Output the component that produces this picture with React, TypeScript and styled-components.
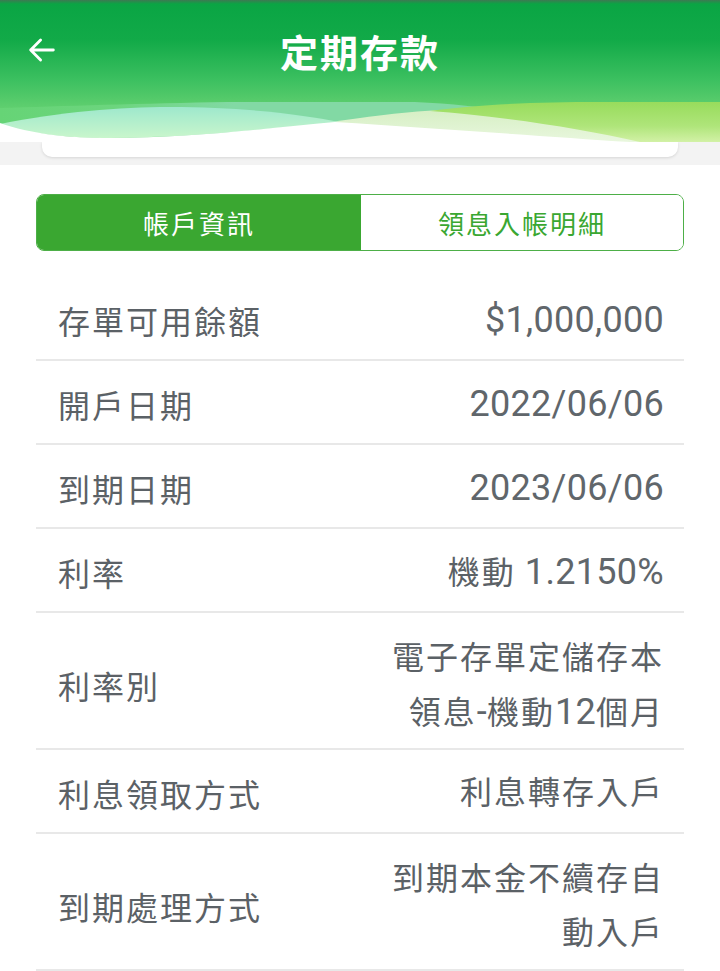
import styled, { createGlobalStyle } from "styled-components";

const GlobalStyle = createGlobalStyle`
  html, body {
    margin: 0;
    padding: 0;
    background: #ffffff;
  }
  body {
    font-family: Roboto, "Noto Sans CJK TC", sans-serif;
  }
`;

const Page = styled.div`
  width: 720px;
  min-height: 971px;
  background: #ffffff;
  overflow: hidden;
`;

const Header = styled.header`
  display: flex;
  flex-direction: column;
  height: 142px;
  background: linear-gradient(
    180deg,
    #3d7a52 0px,
    #0aa544 4px,
    #12aa48 40px,
    #3cc060 80px,
    #62d070 110px
  );
`;

const TopBar = styled.div`
  display: flex;
  align-items: center;
  justify-content: center;
  height: 102px;
  position: relative;
`;

const BackButton = styled.button`
  position: absolute;
  left: 24px;
  top: 32px;
  width: 36px;
  height: 36px;
  border: none;
  background: none;
  padding: 0;
  display: flex;
  align-items: center;
  justify-content: center;
`;

const Title = styled.h1`
  margin: 0;
  margin-top: -2px;
  color: #ffffff;
  font-family: "Noto Sans CJK TC", sans-serif;
  font-size: 38px;
  font-weight: 700;
  letter-spacing: 2px;
`;

const Wave = styled.svg`
  display: block;
  width: 720px;
  height: 40px;
`;

const Strip = styled.div`
  background: #f3f3f3;
  padding: 0 42px 8px;
`;

const Card = styled.div`
  height: 15px;
  background: #ffffff;
  border-radius: 0 0 10px 10px;
  box-shadow: 0 1px 3px rgba(0, 0, 0, 0.12);
`;

const Content = styled.main`
  padding: 29px 36px 0;
`;

const Tabs = styled.div`
  display: grid;
  grid-template-columns: 324px 1fr;
  height: 57px;
  border: 1.5px solid #4daf47;
  border-radius: 8px;
  overflow: hidden;
  box-sizing: border-box;
`;

const Tab = styled.div<{ $active?: boolean }>`
  display: flex;
  align-items: center;
  justify-content: center;
  background: ${(p) => (p.$active ? "#3aa731" : "#ffffff")};
  color: ${(p) => (p.$active ? "#ffffff" : "#3aa731")};
  font-family: "Noto Sans CJK TC", sans-serif;
  font-size: 26px;
  letter-spacing: 2px;
`;

const List = styled.div`
  margin-top: 26px;
  display: flex;
  flex-direction: column;
`;

const Row = styled.div<{ $tall?: boolean }>`
  display: flex;
  align-items: center;
  justify-content: space-between;
  height: ${(p) => (p.$tall ? "137px" : "84px")};
  box-sizing: border-box;
  padding: ${(p) => (p.$tall ? "8px" : "4px")} 20px 0 22px;
  border-bottom: 2px solid #e8e8e8;
  color: #5b6166;
  font-size: 32px;
  letter-spacing: 2px;
`;

const Label = styled.span`
  font-family: "Noto Sans CJK TC", sans-serif;
`;

const Value = styled.span`
  text-align: right;
  line-height: 54px;
  white-space: pre-line;
`;

const Num = styled.span`
  font-family: Roboto, sans-serif;
  font-size: 36px;
  letter-spacing: 0.3px;
  color: #60666b;
`;

const rows = [
  { label: "存單可用餘額", value: "$1,000,000" },
  { label: "開戶日期", value: "2022/06/06" },
  { label: "到期日期", value: "2023/06/06" },
  { label: "利率", value: "機動 1.2150%" },
  { label: "利率別", value: "電子存單定儲存本\n領息-機動12個月", tall: true },
  { label: "利息領取方式", value: "利息轉存入戶" },
  { label: "到期處理方式", value: "到期本金不續存自\n動入戶", tall: true },
];

// latin runs get the number font, CJK stays in the row font
const renderValue = (text: string) =>
  text
    .split(/([\x00-\x7F]+)/)
    .filter((part) => part !== "")
    .map((part, i) =>
      /^[\x00-\x7F]+$/.test(part) ? <Num key={i}>{part}</Num> : part
    );

const App = () => {
  return (
    <Page>
      <GlobalStyle />
      <Header>
        <TopBar>
          <BackButton aria-label="back">
            <svg width="34" height="34" viewBox="0 0 24 24" fill="none">
              <path
                d="M20 12H4M11 5l-7 7 7 7"
                stroke="#ffffff"
                strokeWidth="2"
                strokeLinecap="round"
                strokeLinejoin="round"
              />
            </svg>
          </BackButton>
          <Title>定期存款</Title>
        </TopBar>
        <Wave viewBox="0 0 720 40" preserveAspectRatio="none">
          <defs>
            <linearGradient id="band" x1="0" y1="0" x2="1" y2="0">
              <stop offset="0" stopColor="#66d476" />
              <stop offset="0.22" stopColor="#6cd57e" />
              <stop offset="0.45" stopColor="#82d9a4" />
              <stop offset="1" stopColor="#82d9a4" />
            </linearGradient>
            <linearGradient id="mint" x1="0" y1="0" x2="0" y2="1">
              <stop offset="0" stopColor="#9ee8cc" />
              <stop offset="1" stopColor="#c9f6cc" />
            </linearGradient>
            <linearGradient id="lime" x1="0" y1="0" x2="0" y2="1">
              <stop offset="0" stopColor="#98dc5c" />
              <stop offset="0.6" stopColor="#afe57a" />
              <stop offset="1" stopColor="#d2f1a6" />
            </linearGradient>
            <linearGradient id="pale" x1="0" y1="0" x2="0" y2="1">
              <stop offset="0" stopColor="#d6efc4" />
              <stop offset="1" stopColor="#e9f7de" />
            </linearGradient>
          </defs>
          <path
            d="M0 6 C 100 3, 250 -2, 380 -1 C 440 0, 480 4, 520 12 L520 40 L0 40 Z"
            fill="url(#band)"
          />
          <path
            d="M300 24 C 360 16, 400 10, 440 8 L720 8 L720 40 L300 40 Z"
            fill="url(#pale)"
          />
          <path
            d="M430 9 C 480 2, 540 0, 600 0 L720 0 L720 40 L640 40 C 580 26, 500 14, 430 9 Z"
            fill="url(#lime)"
          />
          <path
            d="M0 22 C 60 10, 120 5, 170 5 C 240 5, 300 12, 340 20 C 260 28, 180 36, 110 36 C 60 36, 20 30, 0 22 Z"
            fill="url(#mint)"
          />
          <path
            d="M0 21 C 30 32, 70 36, 110 36 C 190 36, 270 26, 335 20 C 430 26, 540 34, 630 40 L0 40 Z"
            fill="#ffffff"
          />
        </Wave>
      </Header>
      <Strip>
        <Card />
      </Strip>
      <Content>
        <Tabs>
          <Tab $active>帳戶資訊</Tab>
          <Tab>領息入帳明細</Tab>
        </Tabs>
        <List>
          {rows.map((r) => (
            <Row key={r.label} $tall={r.tall}>
              <Label>{r.label}</Label>
              <Value>{renderValue(r.value)}</Value>
            </Row>
          ))}
        </List>
      </Content>
    </Page>
  );
};

export default App;
